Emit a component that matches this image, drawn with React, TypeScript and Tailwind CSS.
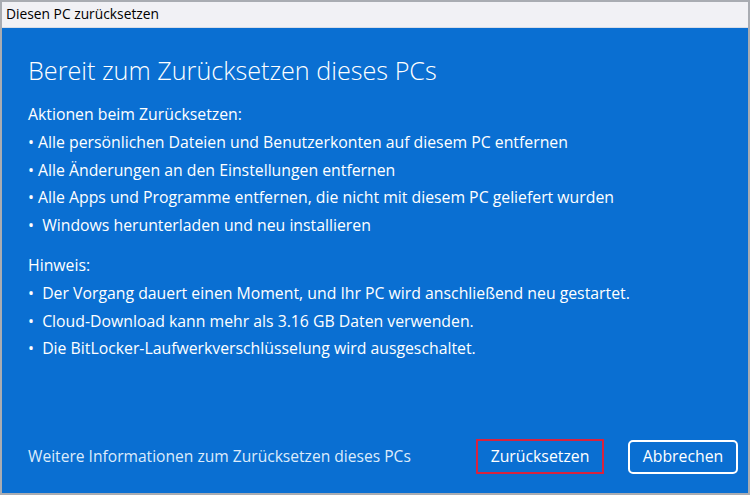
import React from 'react';

const actions = [
  '• Alle persönlichen Dateien und Benutzerkonten auf diesem PC entfernen',
  '• Alle Änderungen an den Einstellungen entfernen',
  '• Alle Apps und Programme entfernen, die nicht mit diesem PC geliefert wurden',
  '•  Windows herunterladen und neu installieren',
];

const notes = [
  '•  Der Vorgang dauert einen Moment, und Ihr PC wird anschließend neu gestartet.',
  '•  Cloud-Download kann mehr als 3.16 GB Daten verwenden.',
  '•  Die BitLocker-Laufwerkverschlüsselung wird ausgeschaltet.',
];

export default function App() {
  return (
    <div
      className="w-[750px] h-[495px] flex flex-col border-2 border-[#a9acb2] bg-[#0a6fd2] overflow-hidden"
      style={{ fontFamily: '"Open Sans", "Noto Sans", sans-serif' }}
    >
      <div className="h-[26px] shrink-0 bg-[#f1f1f5] border-b border-[#d7dde8] flex items-center pl-[4px] text-[13.8px] text-black">
        Diesen PC zurücksetzen
      </div>
      <div className="flex-1 flex flex-col text-white pl-[26px] pr-[10px]">
        <h1 className="mt-[24px] text-[25.2px] font-light leading-[36px]">
          Bereit zum Zurücksetzen dieses PCs
        </h1>
        <div className="mt-[13px] text-[15.8px] leading-[27.8px] whitespace-pre">
          <div>Aktionen beim Zurücksetzen:</div>
          {actions.map((a) => (
            <div key={a}>{a}</div>
          ))}
        </div>
        <div className="mt-[12px] text-[15.8px] leading-[27.8px] whitespace-pre">
          <div>Hinweis:</div>
          {notes.map((n) => (
            <div key={n}>{n}</div>
          ))}
        </div>
        <div className="mt-auto mb-[19px] flex items-center">
          <span className="text-[15.6px] text-[#dcebfb]">Weitere Informationen zum Zurücksetzen dieses PCs</span>
          <button className="ml-auto h-[35px] w-[128px] border-2 border-[#d8233f] text-[15.8px] text-white">
            Zurücksetzen
          </button>
          <button className="ml-[24px] h-[34px] w-[110px] rounded-[5px] border-2 border-white text-[15.8px] text-white">
            Abbrechen
          </button>
        </div>
      </div>
    </div>
  );
}
